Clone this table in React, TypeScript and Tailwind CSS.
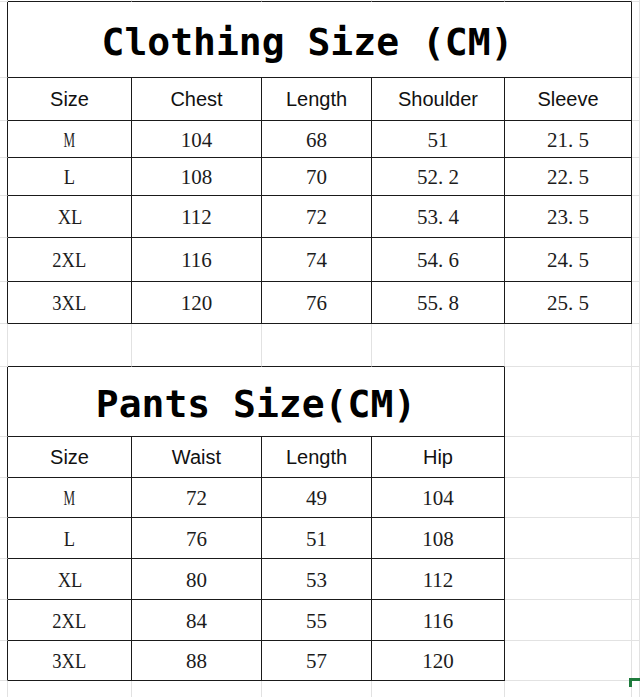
import React from 'react';

const COLS = 'grid grid-cols-[8px_124px_130px_110px_133px_127px_8px]';
const FAINT = 'border-r border-b border-[#e2e2e2]';
const DARK = 'border-r border-b border-[#1a1a1a]';
// left spacer: dark right edge (table's left border), faint bottom
const EDGE = 'border-r border-b border-r-[#1a1a1a] border-b-[#e2e2e2]';
// cell sitting right above a table: dark bottom, faint right
const ABOVE = 'border-r border-b border-r-[#e2e2e2] border-b-[#1a1a1a]';

const SERIF = "font-['Liberation_Serif','Times_New_Roman',serif]";
const SANS = "font-['Liberation_Sans',Arial,sans-serif]";
const MONO = "font-['DejaVu_Sans_Mono','Liberation_Mono',monospace]";

const clothing = {
  headers: ['Size', 'Chest', 'Length', 'Shoulder', 'Sleeve'],
  rows: [
    ['M', '104', '68', '51', '21.5'],
    ['L', '108', '70', '52.2', '22.5'],
    ['XL', '112', '72', '53.4', '23.5'],
    ['2XL', '116', '74', '54.6', '24.5'],
    ['3XL', '120', '76', '55.8', '25.5'],
  ],
  heights: ['h-[37px]', 'h-[38px]', 'h-[42px]', 'h-[44px]', 'h-[42px]'],
};

const pants = {
  headers: ['Size', 'Waist', 'Length', 'Hip'],
  rows: [
    ['M', '72', '49', '104'],
    ['L', '76', '51', '108'],
    ['XL', '80', '53', '112'],
    ['2XL', '84', '55', '116'],
    ['3XL', '88', '57', '120'],
  ],
  heights: ['h-[40px]', 'h-[41px]', 'h-[41px]', 'h-[41px]', 'h-[40px]'],
};

function Value({ text }: { text: string }) {
  if (/^[0-9.]+$/.test(text)) {
    const [whole, frac] = text.split('.');
    return (
      <span>
        {whole}
        {frac !== undefined ? (
          <>
            <span className="inline-block w-[0.5em] text-left">.</span>
            {frac}
          </>
        ) : null}
      </span>
    );
  }
  // SimSun-like narrow latin letters
  return <span className={text === 'M' ? 'inline-block scale-x-[0.62]' : 'inline-block scale-x-[0.88]'}>{text}</span>;
}

function Cell({ children, className = '' }: { children?: React.ReactNode; className?: string }) {
  return <div className={`flex items-center justify-center ${className}`}>{children}</div>;
}

export default function App() {
  return (
    <div className="relative h-[697px] w-[640px] overflow-hidden bg-white">
      {/* sheet row above table 1 */}
      <div className={`${COLS} h-[2px]`}>
        <div className={FAINT} />
        {[0, 1, 2, 3, 4].map((i) => (
          <div key={i} className={ABOVE} />
        ))}
        <div className={FAINT} />
      </div>

      {/* clothing title */}
      <div className={`${COLS} h-[76px]`}>
        <div className={EDGE} />
        <Cell className={`${DARK} col-span-5 pr-6 pt-1`}>
          <span className={`${MONO} text-[38px] font-bold leading-none text-black`}>Clothing Size (CM)</span>
        </Cell>
        <div className={FAINT} />
      </div>

      {/* clothing header */}
      <div className={`${COLS} h-[43px]`}>
        <div className={EDGE} />
        {clothing.headers.map((h) => (
          <Cell key={h} className={`${DARK} ${SANS} text-[20px] text-[#111]`}>
            {h}
          </Cell>
        ))}
        <div className={FAINT} />
      </div>

      {clothing.rows.map((row, r) => (
        <div key={row[0]} className={`${COLS} ${clothing.heights[r]}`}>
          <div className={EDGE} />
          {row.map((v, c) => (
            <Cell key={c} className={`${DARK} ${SERIF} pt-[3px] text-[21px] text-[#1c1c1c]`}>
              <Value text={v} />
            </Cell>
          ))}
          <div className={FAINT} />
        </div>
      ))}

      {/* gap row */}
      <div className={`${COLS} h-[43px]`}>
        <div className={FAINT} />
        {[0, 1, 2, 3].map((i) => (
          <div key={i} className={ABOVE} />
        ))}
        <div className={FAINT} />
        <div className={FAINT} />
      </div>

      {/* pants title */}
      <div className={`${COLS} h-[70px]`}>
        <div className={EDGE} />
        <Cell className={`${DARK} col-span-4 pt-1`}>
          <span className={`${MONO} text-[38px] font-bold leading-none text-black`}>Pants Size(CM)</span>
        </Cell>
        <div className={FAINT} />
        <div className={FAINT} />
      </div>

      {/* pants header */}
      <div className={`${COLS} h-[41px]`}>
        <div className={EDGE} />
        {pants.headers.map((h) => (
          <Cell key={h} className={`${DARK} ${SANS} text-[20px] text-[#111]`}>
            {h}
          </Cell>
        ))}
        <div className={FAINT} />
        <div className={FAINT} />
      </div>

      {pants.rows.map((row, r) => (
        <div key={row[0]} className={`${COLS} ${pants.heights[r]}`}>
          <div className={EDGE} />
          {row.map((v, c) => (
            <Cell key={c} className={`${DARK} ${SERIF} pt-[3px] text-[21px] text-[#1c1c1c]`}>
              <Value text={v} />
            </Cell>
          ))}
          <div className={FAINT} />
          <div className={FAINT} />
        </div>
      ))}

      {/* remaining sheet */}
      <div className={`${COLS} h-[30px]`}>
        {[0, 1, 2, 3, 4, 5, 6].map((i) => (
          <div key={i} className={FAINT} />
        ))}
      </div>

      {/* excel fill handle */}
      <div className="absolute left-[629px] top-[678px] h-[9px] w-[11px] border-l-[3px] border-t-[3px] border-[#1e7b3c]" />
    </div>
  );
}
